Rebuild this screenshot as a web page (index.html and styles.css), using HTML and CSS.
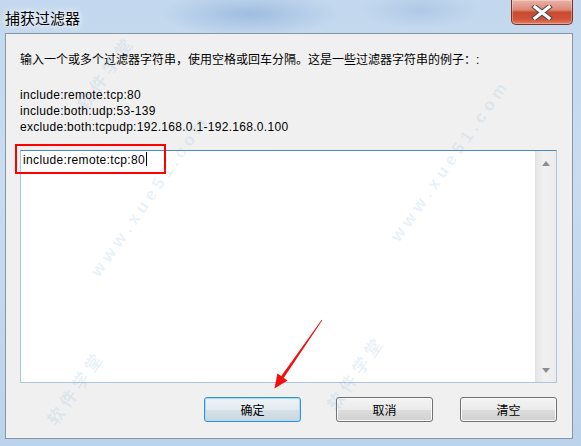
FILE: index.html
```html
<!DOCTYPE html>
<html lang="zh-CN">
<head>
  <meta charset="UTF-8">
  <meta name="viewport" content="width=device-width, initial-scale=1.0">
  <title>捕获过滤器</title>
  <link rel="stylesheet" href="styles.css">
</head>
<body>
  <div class="window">
    <div class="titlebar">
      <span class="title">捕获过滤器</span>
      <button class="close-button" type="button" aria-label="关闭">
        <svg width="22" height="15" viewBox="0 0 22 15">
          <path d="M4 2 L18 13 M18 2 L4 13" stroke="#4a4a4a" stroke-width="5.2" stroke-linecap="square" fill="none"/>
          <path d="M4 2 L18 13 M18 2 L4 13" stroke="#ffffff" stroke-width="3.2" stroke-linecap="square" fill="none"/>
        </svg>
      </button>
    </div>
    <div class="client">
      <p class="intro">输入一个或多个过滤器字符串，使用空格或回车分隔。这是一些过滤器字符串的例子：:</p>
      <div class="examples">
        <div>include:remote:tcp:80</div>
        <div>include:both:udp:53-139</div>
        <div>exclude:both:tcpudp:192.168.0.1-192.168.0.100</div>
      </div>
      <div class="editor">
        <div class="editor-text">include:remote:tcp:80<span class="caret"></span></div>
        <div class="scrollbar">
          <span class="arrow-up"></span>
          <span class="arrow-down"></span>
        </div>
      </div>
      <div class="buttons">
        <button class="btn btn-default btn-ok" type="button">确定</button>
        <button class="btn btn-cancel" type="button">取消</button>
        <button class="btn" type="button">清空</button>
      </div>
    </div>
  </div>

  <!-- annotations on top of the screenshot -->
  <div class="highlight"></div>
  <svg class="pointer" width="581" height="446" viewBox="0 0 581 446">
    <polygon fill="#f01010" points="322.3,320.2 321.7,319.8 281.3,376.1 277.4,373.4 274.5,388.5 287.6,380.6 283.7,377.9"/>
  </svg>

  <span class="watermark wm-1">软 件 学 堂</span>
  <span class="watermark wm-2">w w w . x u e 5 1 . c o m</span>
  <span class="watermark wm-3">软 件 学 堂</span>
  <span class="watermark wm-4">w w w . x u e 5 1 . c o m</span>
  <span class="watermark wm-5">软 件 学 堂</span>
</body>
</html>
```

FILE: styles.css
```css
html, body {
  margin: 0;
  padding: 0;
}

body {
  position: relative;
  width: 581px;
  height: 446px;
  overflow: hidden;
  font-family: "Liberation Sans", "Noto Sans CJK SC", sans-serif;
  color: #000;
  background:
    radial-gradient(ellipse 90px 22px at 250px 14px, #9fbde0 0%, rgba(159, 189, 224, 0) 100%),
    radial-gradient(ellipse 60px 18px at 420px 10px, #afc9e6 0%, rgba(175, 201, 230, 0) 100%),
    linear-gradient(to bottom, #c3d8ee, #c9dcf0 40%, #bcd3ec);
}

.window {
  display: flex;
  flex-direction: column;
  height: 446px;
  padding: 0 8px 7px 5px;
  box-sizing: border-box;
}

.titlebar {
  height: 33px;
  flex-shrink: 0;
  display: flex;
  justify-content: space-between;
  align-items: flex-start;
}

.title {
  font-family: "Noto Sans CJK SC", sans-serif;
  font-size: 15px;
  line-height: 20px;
  padding-top: 8px;
  text-shadow: 0 0 5px #fff, 0 0 9px #fff;
}

.close-button {
  width: 62px;
  height: 25px;
  padding: 0;
  box-sizing: border-box;
  border: 1px solid #7a3328;
  border-top: none;
  border-radius: 0 0 5px 5px;
  background: linear-gradient(to bottom, #eab3a6 0%, #dc8a76 40%, #c94a30 52%, #d0533a 80%, #e0805f 100%);
  box-shadow: inset 0 0 0 1px rgba(255, 255, 255, 0.3);
  display: flex;
  align-items: center;
  justify-content: center;
}

.client {
  flex: 1;
  display: flex;
  flex-direction: column;
  background: #f0f0f0;
  border: 1px solid #8596ab;
  padding: 18px 15px 16px 14px;
  min-height: 0;
}

.intro {
  margin: 0;
  font-size: 12px;
  line-height: 16px;
}

.examples {
  margin-top: 19px;
  font-size: 12px;
  line-height: 16px;
  letter-spacing: 0.3px;
}

.editor {
  flex: 1;
  margin-top: 15px;
  display: flex;
  background: #fff;
  border: 1px solid #abc6e0;
  border-top-color: #4f88bc;
  min-height: 0;
}

.editor-text {
  flex: 1;
  padding: 1px 2px;
  font-size: 12px;
  line-height: 16px;
  letter-spacing: 0.35px;
}

.caret {
  display: inline-block;
  width: 1px;
  height: 14px;
  margin-left: 1px;
  vertical-align: -2px;
  background: #000;
}

.scrollbar {
  width: 20px;
  display: flex;
  flex-direction: column;
  justify-content: space-between;
  align-items: center;
  padding: 10px 0 9px;
  background: linear-gradient(to right, #e6e6e6, #f1f1f1 40%, #ececec);
  border-left: 1px solid #e2e2e2;
}

.arrow-up,
.arrow-down {
  width: 0;
  height: 0;
  border-left: 4.5px solid transparent;
  border-right: 4.5px solid transparent;
}

.arrow-up {
  border-bottom: 5px solid #8d8d8d;
}

.arrow-down {
  border-top: 5px solid #8d8d8d;
}

.buttons {
  display: flex;
  justify-content: flex-end;
  margin-top: 14px;
}

.btn {
  width: 97px;
  height: 25px;
  padding: 0;
  box-sizing: border-box;
  border: 1px solid #707070;
  border-radius: 3px;
  background: linear-gradient(to bottom, #f3f3f3 0%, #ebebeb 50%, #dddddd 51%, #d0d0d0 100%);
  box-shadow: inset 0 0 0 1px #fbfbfb;
  font-family: "Noto Sans CJK SC", sans-serif;
  font-size: 12px;
  color: #000;
}

.btn-default {
  border-color: #3394cc;
  background: linear-gradient(to bottom, #eef3f7 0%, #e4ebf0 50%, #d6e0e7 51%, #cbd7e0 100%);
  box-shadow: inset 0 0 0 1px #a6dcf6;
}

.btn-ok {
  margin-right: 35px;
}

.btn-cancel {
  margin-right: 27px;
}

.highlight {
  position: absolute;
  left: 15px;
  top: 144px;
  width: 151px;
  height: 30px;
  box-sizing: border-box;
  border: 2px solid #ff0000;
}

.pointer {
  position: absolute;
  left: 0;
  top: 0;
  pointer-events: none;
}

.watermark {
  position: absolute;
  pointer-events: none;
  white-space: nowrap;
  font-family: "Liberation Sans", "Noto Sans CJK SC", sans-serif;
  font-weight: bold;
  font-size: 17px;
  color: rgba(120, 170, 215, 0.16);
  transform-origin: left center;
  transform: rotate(-55deg);
}

.wm-1 { left: 80px; top: 95px; }
.wm-2 { left: 95px; top: 265px; }
.wm-3 { left: 330px; top: 395px; }
.wm-4 { left: 395px; top: 230px; }
.wm-5 { left: 50px; top: 410px; }
```
